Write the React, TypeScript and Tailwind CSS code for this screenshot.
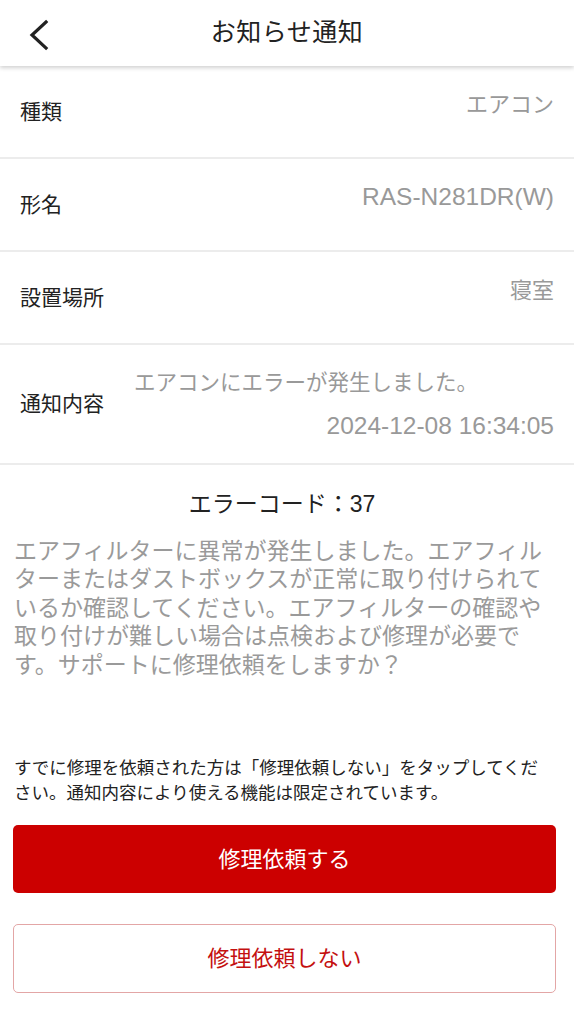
import { ReactNode } from 'react';

const font = { fontFamily: '"Liberation Sans", "Noto Sans CJK JP", sans-serif' };

function Row({ label, children, tall }: { label: string; children: ReactNode; tall?: boolean }) {
  return (
    <div
      className={`flex items-center justify-between border-b-2 border-[#ececec] pl-[20px] pr-[20px] ${
        tall ? 'h-[120px]' : 'h-[93px]'
      }`}
    >
      <span className="text-[21px] text-[#222]">{label}</span>
      {children}
    </div>
  );
}

export default function App() {
  return (
    <div className="w-[574px] h-[1024px] bg-white overflow-hidden" style={font}>
      <header className="relative z-10 h-[66px] flex items-center justify-center bg-white shadow-[0_2px_4px_rgba(0,0,0,0.18)]">
        <button className="absolute left-[22px] top-[14px] p-1">
          <svg width="28" height="34" viewBox="0 0 28 34" fill="none">
            <path d="M20 4 L6 17 L20 30" stroke="#222" strokeWidth="3.2" strokeLinecap="square" />
          </svg>
        </button>
        <h1 className="text-[25px] text-[#222] tracking-[0.5px]">お知らせ通知</h1>
      </header>

      <Row label="種類">
        <span className="pb-[15px] text-[22px] text-[#999]">エアコン</span>
      </Row>
      <Row label="形名">
        <span className="pb-[15px] text-[24.5px] text-[#999]">RAS-N281DR(W)</span>
      </Row>
      <Row label="設置場所">
        <span className="pb-[15px] text-[22px] text-[#999]">寝室</span>
      </Row>
      <Row label="通知内容" tall>
        <div className="w-[420px] flex flex-col">
          <span className="text-[21.5px] text-[#999]">エアコンにエラーが発生しました。</span>
          <span className="mt-[12px] text-right text-[24.5px] leading-[30px] text-[#999]">2024-12-08 16:34:05</span>
        </div>
      </Row>

      <div className="pt-[22px] pr-[10px] text-center text-[23px] text-[#222]">エラーコード：37</div>

      <p className="mt-[15px] px-[14px] w-[560px] text-[23px] leading-[28.5px] text-[#9a9a9a]">
        エアフィルターに異常が発生しました。エアフィルターまたはダストボックスが正常に取り付けられているか確認してください。エアフィルターの確認や取り付けが難しい場合は点検および修理が必要です。サポートに修理依頼をしますか？
      </p>

      <p className="mt-[77px] ml-[14px] w-[538px] text-[17.5px] leading-[25px] text-[#222]">
        すでに修理を依頼された方は「修理依頼しない」をタップしてください。通知内容により使える機能は限定されています。
      </p>

      <div className="pl-[13px] mt-[19px] flex flex-col gap-[31px] w-[556px]">
        <button className="h-[68px] w-full rounded-[5px] bg-[#cc0000] text-white text-[22px]">修理依頼する</button>
        <button className="h-[69px] w-full rounded-[5px] border border-[#e3a6a6] bg-white text-[#c41010] text-[22px]">
          修理依頼しない
        </button>
      </div>
    </div>
  );
}
